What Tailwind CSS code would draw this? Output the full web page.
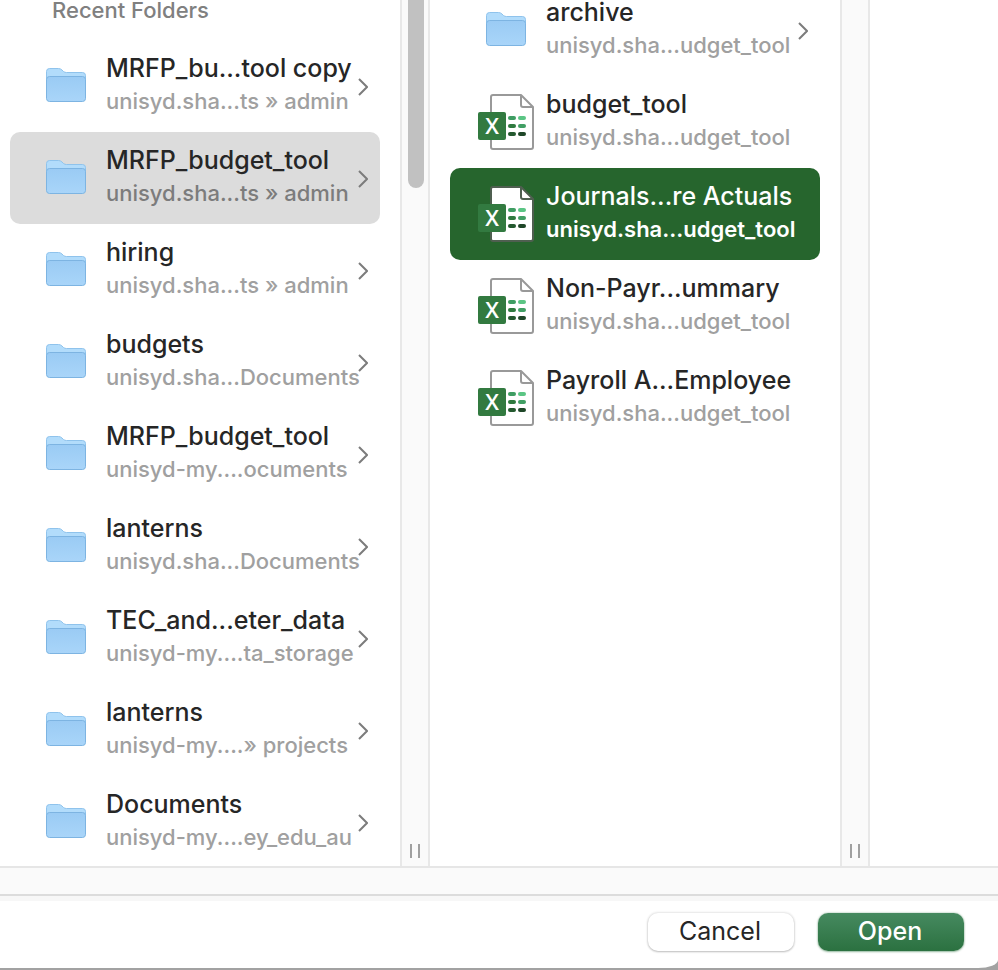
<!DOCTYPE html>
<html lang="en">
<head>
<meta charset="utf-8">
<meta name="viewport" content="width=device-width, initial-scale=1">
<title>Open</title>
<script src="https://cdn.jsdelivr.net/npm/@tailwindcss/browser@4"></script>
</head>
<body class="bg-[#a2a2a2] font-['Inter',sans-serif] text-[#262626]">
<svg class="absolute size-0" aria-hidden="true">
  <defs>
    <linearGradient id="folderFront" x1="0" y1="0" x2="0" y2="1">
      <stop offset="0" stop-color="#9acbf4"/><stop offset="1" stop-color="#a9d5f9"/>
    </linearGradient>
    <symbol id="folder" viewBox="0 0 40 34">
      <path d="M.5 30V3.500Q.5.500 3.500.500H12.500Q14.500.500 16 2L17.500 3.500Q18.800 4.500 20.500 4.500H36.500Q39.500 4.500 39.500 7.500V30Z" fill="#b2dcfb" stroke="#8fc3ec"/>
      <path d="M.5 11.500Q.5 8.500 3.500 8.500H36.500Q39.500 8.500 39.500 11.500V30.500Q39.500 33.500 36.500 33.500H3.500Q.5 33.500.5 30.500Z" fill="url(#folderFront)" stroke="#7db4e2"/>
    </symbol>
    <symbol id="excel" viewBox="0 0 56 56">
      <path d="M15 1H43L55 13V53Q55 55 53 55H15Q13 55 13 53V3Q13 1 15 1Z" fill="#fff" stroke="currentColor" stroke-width="2" stroke-linejoin="round"/>
      <path d="M43 1V11Q43 13 45 13H55" fill="none" stroke="currentColor" stroke-width="2"/>
      <g stroke-width="4" stroke-linecap="round">
        <path d="M32 24H36" stroke="#3f9d63"/><path d="M42 24H46" stroke="#5bc584"/>
        <path d="M32 32H36" stroke="#2f7a3f"/><path d="M42 32H46" stroke="#419f64"/>
        <path d="M32 40H36" stroke="#24592f"/><path d="M42 40H46" stroke="#1f4728"/>
      </g>
      <rect y="18" width="28" height="28" rx="2" fill="#327a40"/>
      <text x="14" y="40" text-anchor="middle" font-family="Open Sans, sans-serif" font-size="22" font-weight="600" fill="#fff">X</text>
    </symbol>
    <symbol id="chevron" viewBox="0 0 10 18">
      <path d="M1 1L9 9L1 17" fill="none" stroke="currentColor" stroke-width="2"/>
    </symbol>
  </defs>
</svg>
<div class="flex h-screen flex-col pb-0.5">
<div class="flex min-h-0 flex-1 flex-col overflow-hidden rounded-br-[20px_8px] bg-white">
  <main class="flex min-h-0 flex-1 overflow-hidden">
    <section class="w-[400px] shrink-0 overflow-hidden pr-5 pl-2.5" aria-labelledby="recent">
      <h2 id="recent" class="-mt-1 h-11 pl-[42px] text-[22px] leading-7 font-medium text-[#808080]">Recent Folders</h2>
      <ul id="folders"></ul>
    </section>
    <div class="relative flex w-[30px] shrink-0 items-end justify-center border-x-2 border-[#e8e8e8] bg-[#fafafa] pb-2" role="separator">
      <span class="absolute top-0 right-1 h-[188px] w-4 rounded-b-full bg-[#c1c1c1]"></span>
      <span class="h-3.5 w-2.5 border-x-2 border-[#a0a0a0]"></span>
    </div>
    <section class="w-[410px] shrink-0 overflow-hidden px-5" aria-label="Folder contents">
      <ul id="files" class="-mt-4"></ul>
    </section>
    <div class="flex w-[30px] shrink-0 items-end justify-center border-x-2 border-[#e8e8e8] bg-[#fafafa] pb-2" role="separator">
      <span class="h-3.5 w-2.5 border-x-2 border-[#a0a0a0]"></span>
    </div>
    <section class="flex-1" aria-label="Preview"></section>
  </main>
  <div class="h-[30px] shrink-0 border-y-2 border-t-[#e6e6e6] border-b-[#dcdcdc] bg-[#fafafa]"></div>
  <footer class="flex shrink-0 justify-end gap-6 border-t-[5px] border-[#f7f7f7] pt-3 pr-[34px] pb-[17px] text-[25px] leading-9">
    <button class="h-[38px] w-[146px] rounded-[10px] bg-white pr-0.5 pb-0.5 shadow-[0_0_2px_1px_#00000018,0_1px_2px_#00000030]">Cancel</button>
    <button class="h-[38px] w-[146px] rounded-[10px] bg-linear-to-b from-[#468a60] to-[#2b7140] pr-0.5 pb-0.5 font-medium text-white shadow-[0_0_2px_#2b714080,0_1px_2px_#2b714060]">Open</button>
  </footer>
</div>
</div>
<script>
const folders = [
  ["MRFP_bu...tool copy", "unisyd.sha...ts » admin"],
  ["MRFP_budget_tool", "unisyd.sha...ts » admin", true],
  ["hiring", "unisyd.sha...ts » admin"],
  ["budgets", "unisyd.sha...Documents"],
  ["MRFP_budget_tool", "unisyd-my....ocuments"],
  ["lanterns", "unisyd.sha...Documents"],
  ["TEC_and...eter_data", "unisyd-my....ta_storage"],
  ["lanterns", "unisyd-my....» projects"],
  ["Documents", "unisyd-my....ey_edu_au"]
];
const files = [
  ["archive", true],
  ["budget_tool"],
  ["Journals...re Actuals", false, true],
  ["Non-Payr...ummary"],
  ["Payroll A...Employee"]
];
function row(title, sub, isFolder, tone, subTone, iconTone) {
  const icon = isFolder
    ? '<svg class="mb-0.5 h-[34px] w-10"><use href="#folder"/></svg>'
    : `<svg class="size-14 ${iconTone}"><use href="#excel"/></svg>`;
  const chevron = isFolder ? '<svg class="mt-0.5 h-[18px] w-2.5 shrink-0 text-[#7c7c7c]"><use href="#chevron"/></svg>' : '';
  return `<li><button class="flex h-[92px] w-full items-center gap-3 rounded-[10px] pr-3 pl-7 text-left ${tone}">
    <span class="flex w-14 shrink-0 justify-center">${icon}</span>
    <span class="flex w-0 flex-1 flex-col pb-0.5 whitespace-nowrap">
      <span class="text-[25px] leading-8 font-medium">${title}</span>
      <span class="text-[22px] leading-[34px] ${subTone}">${sub}</span>
    </span>
    <span class="-ml-3 flex">${chevron}</span></button></li>`;
}
document.getElementById("folders").innerHTML = folders.map(([t, s, on]) =>
  row(t, s, true, on ? "bg-[#dcdcdc]" : "", on ? "font-medium text-[#7c7c7c]" : "font-medium text-[#a0a0a0]", "")).join("");
document.getElementById("files").innerHTML = files.map(([t, f, on]) =>
  row(t, "unisyd.sha...udget_tool", f, on ? "bg-[#26652d] text-white" : "", on ? "font-semibold text-white" : "font-medium text-[#a0a0a0]", on ? "text-[#4f5f50]" : "text-[#999999]")).join("");
</script>
</body>
</html>
